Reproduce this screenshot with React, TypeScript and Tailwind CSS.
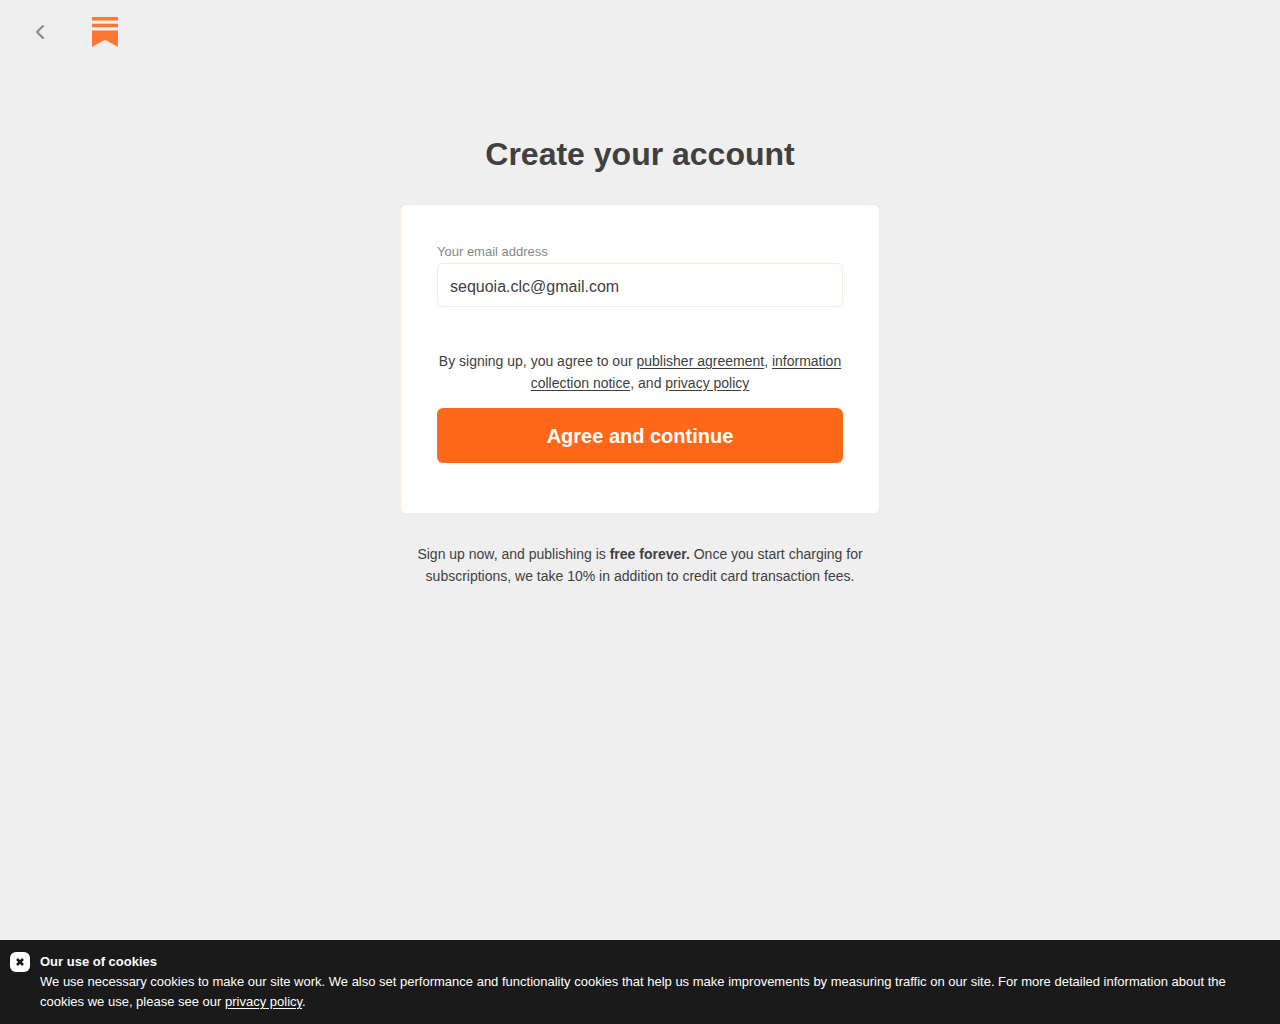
import React, { useState } from "react";

interface TextLinkProps {
    href: string;
    children: React.ReactNode;
}

function TextLink({ href, children }: TextLinkProps) {
    return (
        <a href={href} className="underline underline-offset-2">
            {children}
        </a>
    );
}

function BackIcon() {
    return (
        <svg width="20" height="20" viewBox="0 0 20 20" fill="none" aria-hidden="true">
            <path
                d="M13 4L7 10l6 6"
                stroke="#868787"
                strokeWidth="2"
                strokeLinecap="round"
                strokeLinejoin="round"
            />
        </svg>
    );
}

function Logo() {
    return (
        <svg width="26" height="30" viewBox="0 0 26 30" fill="#ff7731" aria-hidden="true">
            <path d="M0 0h26v3.5H0z" />
            <path d="M0 6.7h26v3.6H0z" />
            <path d="M0 13.4h26V30l-13-7.2L0 30z" />
        </svg>
    );
}

function Header() {
    return (
        <header className="flex h-16 items-center gap-8 px-5">
            <button
                type="button"
                aria-label="Back"
                className="flex size-10 items-center justify-center rounded-full bg-[#eeeeee]"
            >
                <BackIcon />
            </button>
            <a href="#home" aria-label="Home">
                <Logo />
            </a>
        </header>
    );
}

function SignupForm() {
    const [email, setEmail] = useState<string>("sequoia.clc@gmail.com");

    const handleSubmit = (e: React.FormEvent) => {
        e.preventDefault();
    };

    return (
        <form
            onSubmit={handleSubmit}
            className="mt-7 rounded-md border border-[#fae8dc] bg-white px-9 pt-9 pb-[50px]"
        >
            <label htmlFor="email" className="block text-[13px] leading-[22px] text-[#868787]">
                Your email address
            </label>
            <input
                id="email"
                type="email"
                value={email}
                onChange={(e) => setEmail(e.target.value)}
                className="block h-11 w-full rounded-md border border-[#fae8dc] px-3 pt-[3px] text-base outline-none"
            />
            <p className="mt-[43px] text-center text-sm leading-[22px]">
                By signing up, you agree to our{" "}
                <TextLink href="#publisher-agreement">publisher agreement</TextLink>,{" "}
                <TextLink href="#collection-notice">information collection notice</TextLink>, and{" "}
                <TextLink href="#privacy">privacy policy</TextLink>
            </p>
            <button
                type="submit"
                className="mt-[14px] h-[55px] w-full rounded-md bg-[#ff6719] text-xl font-bold text-white"
            >
                Agree and continue
            </button>
        </form>
    );
}

function CookieBanner() {
    const [open, setOpen] = useState<boolean>(true);

    if (!open) return null;

    return (
        <aside className="flex items-start gap-[10px] bg-[#1a1a1a] px-[10px] py-3 text-[13px] leading-5 text-white">
            <button
                type="button"
                aria-label="Close"
                onClick={() => setOpen(false)}
                className="flex size-5 shrink-0 items-center justify-center rounded-md bg-white"
            >
                <svg width="8" height="8" viewBox="0 0 8 8" aria-hidden="true">
                    <path d="M1 1l6 6M7 1L1 7" stroke="#1a1a1a" strokeWidth="2.6" />
                </svg>
            </button>
            <div className="pr-4">
                <h2 className="font-bold">Our use of cookies</h2>
                <p>
                    We use necessary cookies to make our site work. We also set performance and
                    functionality cookies that help us make improvements by measuring traffic on our
                    site. For more detailed information about the cookies we use, please see our{" "}
                    <TextLink href="#cookie-policy">privacy policy</TextLink>.
                </p>
            </div>
        </aside>
    );
}

export default function App() {
    return (
        <div className="flex min-h-screen flex-col bg-[#efefef] font-['Liberation_Sans',Arial,sans-serif] text-[#404040]">
            <Header />
            <main className="mx-auto w-full max-w-[480px] flex-1 pt-[68px]">
                <h1 className="text-center text-[32px] leading-[44px] font-bold">
                    Create your account
                </h1>
                <SignupForm />
                <p className="mt-[29px] px-3 text-center text-sm leading-[22px]">
                    Sign up now, and publishing is <strong>free forever.</strong> Once you start
                    charging for subscriptions, we take 10% in addition to credit card transaction
                    fees.
                </p>
            </main>
            <CookieBanner />
        </div>
    );
}
